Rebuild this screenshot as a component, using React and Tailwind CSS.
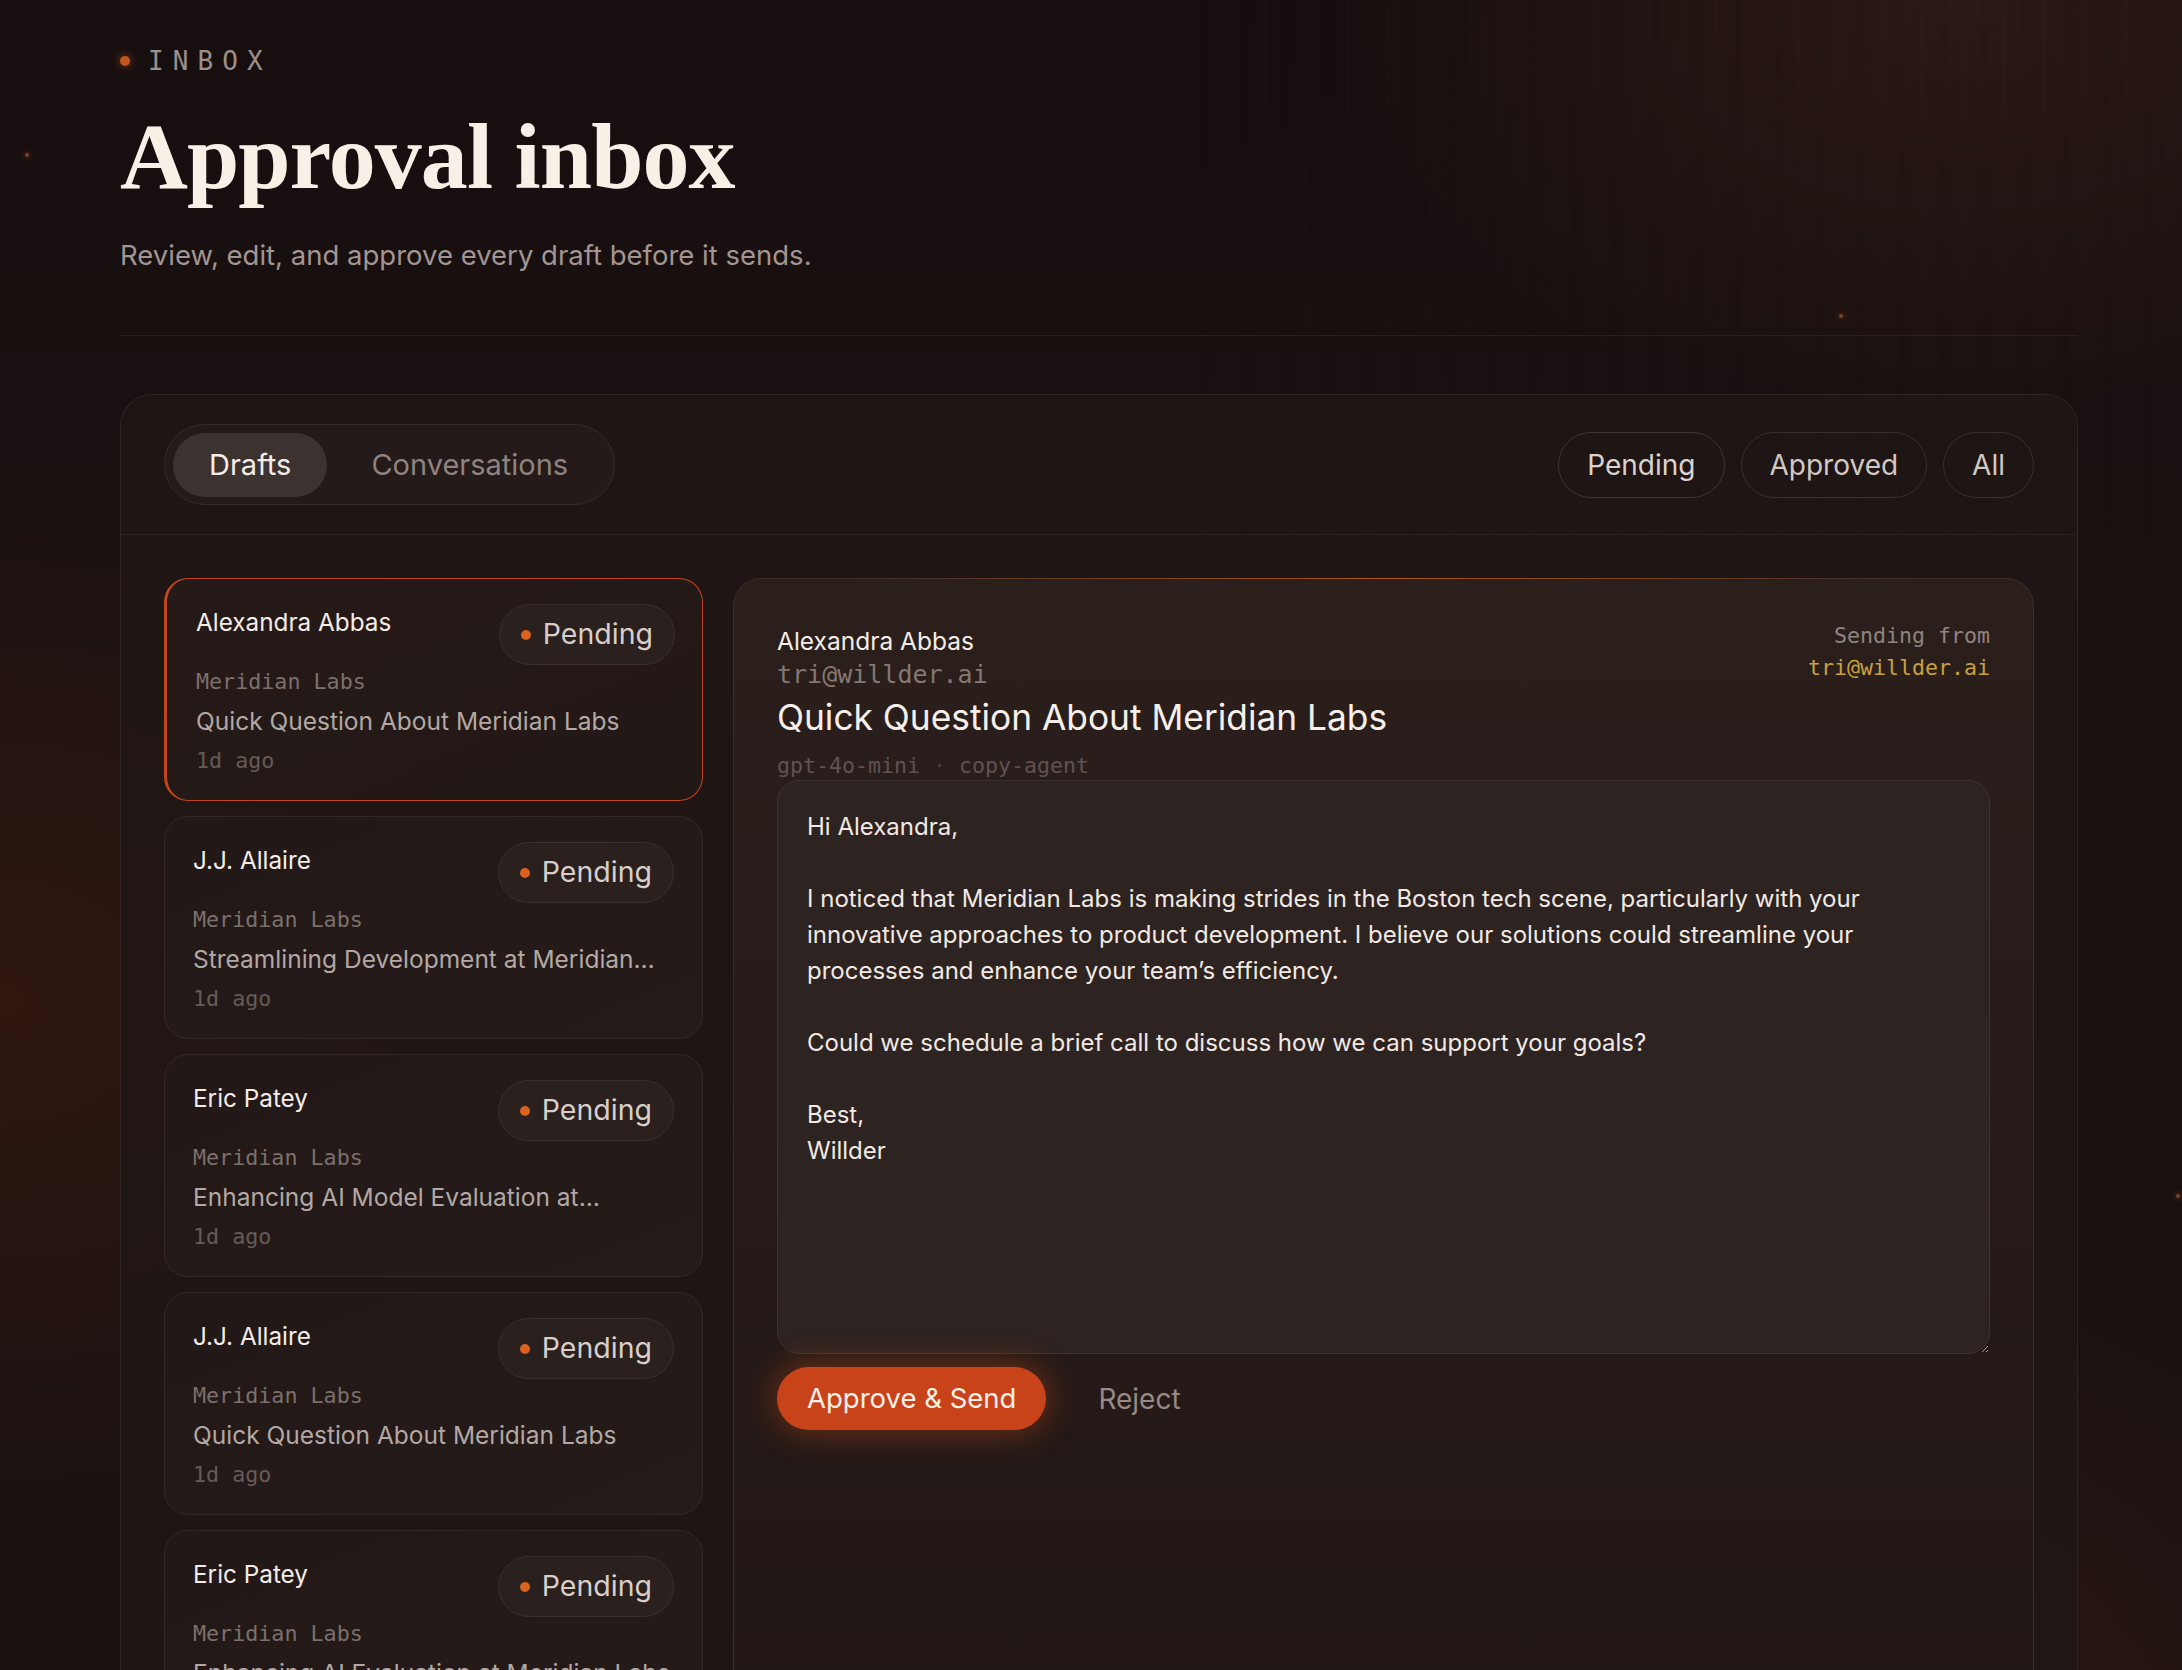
import { useState } from "react";

const drafts = [
  { id: 1, name: "Alexandra Abbas", company: "Meridian Labs", subject: "Quick Question About Meridian Labs", time: "1d ago" },
  { id: 2, name: "J.J. Allaire", company: "Meridian Labs", subject: "Streamlining Development at Meridian Labs", time: "1d ago" },
  { id: 3, name: "Eric Patey", company: "Meridian Labs", subject: "Enhancing AI Model Evaluation at Meridian Labs", time: "1d ago" },
  { id: 4, name: "J.J. Allaire", company: "Meridian Labs", subject: "Quick Question About Meridian Labs", time: "1d ago" },
  { id: 5, name: "Eric Patey", company: "Meridian Labs", subject: "Enhancing AI Evaluation at Meridian Labs", time: "1d ago" },
];

const body = `Hi Alexandra,

I noticed that Meridian Labs is making strides in the Boston tech scene, particularly with your innovative approaches to product development. I believe our solutions could streamline your processes and enhance your team’s efficiency.

Could we schedule a brief call to discuss how we can support your goals?

Best,
Willder`;

const mono = "font-['DejaVu_Sans_Mono','Liberation_Mono',monospace]";

// little embers scattered over the backdrop
const sparks = [
  "left-[25px] top-[153px]",
  "left-[1839px] top-[314px]",
  "left-[2013px] top-[1213px]",
  "left-[1611px] top-[1492px]",
  "left-[843px] top-[1347px]",
  "left-[1356px] top-[1027px]",
  "left-[588px] top-[593px]",
  "left-[2176px] top-[1194px]",
];

function PendingBadge() {
  return (
    <span className="flex h-[61px] shrink-0 items-center gap-[12px] rounded-full border border-[#3a2f2c] bg-[#2a201e] px-[21px] text-[28.5px] text-[#d9cec9]">
      <span className="h-[10px] w-[10px] rounded-full bg-[#d9621f]" />
      Pending
    </span>
  );
}

function DraftCard({ draft, selected, onSelect }) {
  return (
    <button
      type="button"
      onClick={onSelect}
      className={
        selected
          ? "block w-full rounded-[24px] border-[1.5px] border-l-[3px] border-[#c2451c] bg-gradient-to-br from-[#251a18] to-[#221816] pb-[25px] pl-[29px] pr-[27px] pt-[25px] text-left"
          : "block w-full rounded-[24px] border border-[#332826] bg-gradient-to-br from-[#221817] to-[#251b19] px-[28px] pb-[25px] pt-[25px] text-left"
      }
    >
      <div className="flex items-start justify-between">
        <span className="text-[24.3px] leading-[36px] text-[#f4ece6]">{draft.name}</span>
        <PendingBadge />
      </div>
      <div className={`${mono} mt-[3px] text-[21.7px] leading-[28px] text-[#7c706c]`}>{draft.company}</div>
      <div className="mt-[8px] line-clamp-1 text-[24.5px] leading-[34px] text-[#b3a8a4]">{draft.subject}</div>
      <div className={`${mono} mt-[9px] text-[21.7px] leading-[28px] text-[#675a56]`}>{draft.time}</div>
    </button>
  );
}

export default function App() {
  const [tab, setTab] = useState("drafts");
  const [filter, setFilter] = useState("pending");
  const [selectedId, setSelectedId] = useState(1);

  return (
    <div className="relative h-[1670px] overflow-hidden bg-[#1a1111] font-['Inter',sans-serif]">
      <div className="pointer-events-none absolute inset-0 bg-[radial-gradient(ellipse_900px_700px_at_0%_60%,rgba(90,35,15,0.35),transparent_70%)]" />
      <div className="pointer-events-none absolute inset-0 bg-[radial-gradient(ellipse_1400px_900px_at_70%_110%,rgba(80,38,20,0.55),transparent_70%)]" />
      <div className="pointer-events-none absolute inset-0 bg-[linear-gradient(180deg,rgba(20,13,13,0.6)_0%,transparent_40%)]" />
      <div className="pointer-events-none absolute inset-0 bg-[radial-gradient(ellipse_900px_600px_at_90%_0%,rgba(75,42,30,0.4),transparent_70%)]" />
      <div className="pointer-events-none absolute right-0 top-0 h-[650px] w-[1000px] bg-[repeating-linear-gradient(90deg,rgba(255,220,200,0.01)_0px,rgba(255,220,200,0.01)_3px,transparent_3px,transparent_19px,rgba(0,0,0,0.03)_19px,rgba(0,0,0,0.03)_27px,transparent_27px,transparent_41px)] [mask-image:linear-gradient(180deg,black,transparent)]" />
      {sparks.map((pos) => (
        <span key={pos} className={`pointer-events-none absolute h-[4px] w-[4px] rounded-full bg-[#c8602a]/60 shadow-[0_0_6px_rgba(220,110,40,0.6)] ${pos}`} />
      ))}

      <div className="relative ml-[120px] w-[1958px] pt-[45px]">
        <div className="flex h-[32px] items-center gap-[18px]">
          <span className="h-[10px] w-[10px] rounded-full bg-[#c2561a] shadow-[0_0_10px_rgba(220,100,30,0.6)]" />
          <span className={`${mono} text-[26px] tracking-[0.35em] text-[#9b8f8b]`}>INBOX</span>
        </div>
        <h1 className="mt-[32px] font-['Liberation_Serif',serif] text-[94px] font-bold leading-[94px] tracking-[-0.01em] text-[#f8f0e7]">
          Approval inbox
        </h1>
        <p className="mt-[34px] text-[27.5px] leading-[36px] text-[#a39592]">
          Review, edit, and approve every draft before it sends.
        </p>
        <div className="mt-[62px] h-px bg-[#2a201f]" />

        <section className="mt-[58px] rounded-t-[32px] border border-b-0 border-[#2f2523] bg-[#1f1615]/80">
          <header className="flex items-center justify-between border-b border-[#2c2220] px-[43px] pb-[29px] pt-[29px]">
            <div className="flex h-[81px] items-center gap-[6px] rounded-full border border-[#372c2a] bg-[#231a19] p-[8px]">
              {[
                ["drafts", "Drafts"],
                ["conversations", "Conversations"],
              ].map(([key, label]) => (
                <button
                  key={key}
                  type="button"
                  onClick={() => setTab(key)}
                  className={
                    tab === key
                      ? "h-[64px] rounded-full bg-[#3c3230] px-[36px] text-[29px] text-[#f4ece6]"
                      : "h-[64px] rounded-full px-[38px] text-[29px] text-[#8f8380]"
                  }
                >
                  {label}
                </button>
              ))}
            </div>
            <div className="flex items-center gap-[16px]">
              {[
                ["pending", "Pending"],
                ["approved", "Approved"],
                ["all", "All"],
              ].map(([key, label]) => (
                <button
                  key={key}
                  type="button"
                  onClick={() => setFilter(key)}
                  className={
                    filter === key
                      ? "h-[66px] rounded-full border border-[#3f3431] px-[28px] text-[28px] text-[#dcd2cd]"
                      : "h-[66px] rounded-full border border-[#3a2f2c] px-[28px] text-[28px] text-[#d3c8c3]"
                  }
                >
                  {label}
                </button>
              ))}
            </div>
          </header>

          <div className="flex items-start gap-[30px] px-[43px] pt-[43px]">
            <div className="flex w-[539px] shrink-0 flex-col gap-[15px]">
              {drafts.map((d) => (
                <DraftCard key={d.id} draft={d} selected={d.id === selectedId} onSelect={() => setSelectedId(d.id)} />
              ))}
            </div>

            <article className="relative min-h-[1200px] flex-1 rounded-t-[28px] border border-b-0 border-[#3a2d29] bg-gradient-to-b from-[#2b1f1c] via-[#261b19] to-[#211715] px-[43px] pt-[44px]">
              <div className="pointer-events-none absolute left-[120px] right-[120px] top-[-1px] h-px bg-gradient-to-r from-transparent via-[#b5541f] to-transparent" />
              <div className="flex items-start justify-between">
                <div>
                  <div className="text-[24.5px] leading-[36px] text-[#f4ece6]">Alexandra Abbas</div>
                  <div className={`${mono} text-[25px] leading-[32px] text-[#857874]`}>tri@willder.ai</div>
                </div>
                <div className={`${mono} -mt-[3px] text-right text-[21.6px] leading-[32px]`}>
                  <div className="text-[#8f8480]">Sending from</div>
                  <div className="text-[#c9a13d]">tri@willder.ai</div>
                </div>
              </div>
              <h2 className="mt-[5px] text-[35.3px] leading-[44px] text-[#f7efe9]">Quick Question About Meridian Labs</h2>
              <div className={`${mono} mt-[12px] text-[21.6px] leading-[28px] text-[#5f5350]`}>
                gpt-4o-mini <span className="text-[#4a3f3c]">·</span> copy-agent
              </div>
              <textarea
                defaultValue={body}
                className="block h-[574px] w-full resize-y rounded-[22px] border border-[#3d322f] bg-[#2d2321] px-[29px] pt-[28px] text-[24px] leading-[36px] text-[#f2e9e3] outline-none"
              />
              <div className="mt-[13px] flex items-center gap-[22px]">
                <button
                  type="button"
                  className="h-[63px] rounded-full bg-[#c8421a] px-[30px] text-[27.5px] text-[#fff1e8] shadow-[0_0_34px_rgba(230,85,20,0.45)]"
                >
                  Approve &amp; Send
                </button>
                <button type="button" className="h-[63px] px-[30px] text-[28px] text-[#968986]">
                  Reject
                </button>
              </div>
            </article>
          </div>
        </section>
      </div>
    </div>
  );
}
